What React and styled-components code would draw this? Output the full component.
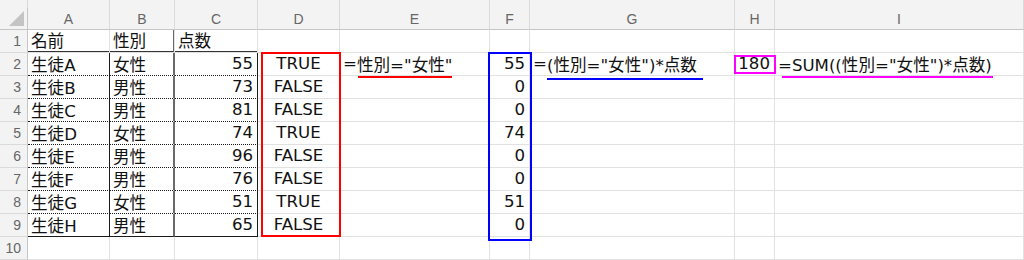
import React from 'react';
import styled, { createGlobalStyle } from 'styled-components';

const GlobalStyle = createGlobalStyle`
  html, body {
    margin: 0;
    padding: 0;
    background: #ffffff;
  }
  * {
    box-sizing: border-box;
  }
`;

const FONT = `"DejaVu Sans", "Noto Sans CJK JP", sans-serif`;

const Sheet = styled.div`
  display: grid;
  grid-template-columns: 28px 82px 65px 83px 82px 150px 40px 205px 40px 1fr;
  grid-template-rows: 8px 22px repeat(10, 23px);
  width: 1024px;
  height: 260px;
  overflow: hidden;
  font-family: ${FONT};
  font-size: 16.6px;
  color: #111;
  background: #fff;
`;

const Strip = styled.div`
  grid-column: ${(p) => p.$col};
  grid-row: 1;
  background: #f3f3f3;
  border-right: 1px solid #dadada;
`;

const ColHead = styled.div`
  grid-column: ${(p) => p.$col};
  grid-row: 2;
  display: flex;
  align-items: center;
  justify-content: center;
  background: #f3f3f3;
  border-right: 1px solid #dadada;
  border-bottom: 1px solid #c6c6c6;
  font-family: "Liberation Sans", sans-serif;
  font-size: 14px;
  color: #666;
`;

const Corner = styled.div`
  grid-column: 1;
  grid-row: 2;
  position: relative;
  background: #f3f3f3;
  border-right: 1px solid #c6c6c6;
  border-bottom: 1px solid #c6c6c6;

  &::after {
    content: '';
    position: absolute;
    right: 3px;
    bottom: 3px;
    width: 15px;
    height: 15px;
    background: #c4c4c4;
    clip-path: polygon(100% 0, 100% 100%, 0 100%);
  }
`;

const RowHead = styled.div`
  grid-column: 1;
  grid-row: ${(p) => p.$row};
  display: flex;
  align-items: center;
  justify-content: flex-end;
  padding-right: 6px;
  background: #f3f3f3;
  border-right: 1px solid #c6c6c6;
  border-bottom: 1px solid #dadada;
  font-family: "Liberation Sans", sans-serif;
  font-size: 14px;
  color: #666;
`;

const Cell = styled.div`
  grid-column: ${(p) => p.$col};
  grid-row: ${(p) => p.$row};
  display: flex;
  align-items: center;
  justify-content: ${(p) =>
    p.$align === 'right' ? 'flex-end' : p.$align === 'center' ? 'center' : 'flex-start'};
  padding: 0 ${(p) => (p.$align === 'right' ? '4px' : '0')} 1px ${(p) => (p.$align === 'left' ? '3px' : '0')};
  border-right: 1px solid #e1e1e1;
  border-bottom: 1px solid #e1e1e1;
  white-space: nowrap;
  overflow: visible;
`;

const TableCell = styled(Cell)`
  border-right: ${(p) => p.$right || '1px solid #1a1a1a'};
  border-bottom: ${(p) => p.$bottom || '1px dotted #1a1a1a'};
`;

const Frame = styled.div`
  grid-column: ${(p) => p.$col};
  grid-row: ${(p) => p.$rows};
  margin: ${(p) => p.$margin};
  border: 2px solid ${(p) => p.$color};
  pointer-events: none;
`;

const Marked = styled.span`
  position: relative;

  &::after {
    content: '';
    position: absolute;
    left: ${(p) => p.$from}px;
    right: ${(p) => -p.$extra}px;
    bottom: ${(p) => p.$drop}px;
    height: 2px;
    background: ${(p) => p.$color};
  }
`;

const cols = ['A', 'B', 'C', 'D', 'E', 'F', 'G', 'H', 'I'];

const students = [
  ['生徒A', '女性', 55],
  ['生徒B', '男性', 73],
  ['生徒C', '男性', 81],
  ['生徒D', '女性', 74],
  ['生徒E', '男性', 96],
  ['生徒F', '男性', 76],
  ['生徒G', '女性', 51],
  ['生徒H', '男性', 65],
];

// grid row of sheet row n (strip = 1, header = 2)
const gr = (n) => n + 2;

export default function App() {
  return (
    <>
      <GlobalStyle />
      <Sheet>
        <Strip $col={1} />
        {cols.map((c, i) => (
          <Strip key={'s' + c} $col={i + 2} />
        ))}
        <Corner />
        {cols.map((c, i) => (
          <ColHead key={c} $col={i + 2}>
            {c}
          </ColHead>
        ))}
        {Array.from({ length: 10 }, (_, i) => (
          <RowHead key={'r' + i} $row={gr(i + 1)}>
            {i + 1}
          </RowHead>
        ))}

        {/* header row of the data table */}
        <TableCell $col={2} $row={gr(1)} $align="left" $bottom="2px solid #333">名前</TableCell>
        <TableCell $col={3} $row={gr(1)} $align="left" $bottom="2px solid #333" $right="2px solid #6a6a6a">性別</TableCell>
        <TableCell $col={4} $row={gr(1)} $align="left" $bottom="2px solid #333">点数</TableCell>

        {students.map(([name, sex, score], i) => {
          const row = gr(i + 2);
          const last = i === students.length - 1;
          const bottom = last ? '1px solid #1a1a1a' : undefined;
          const female = sex === '女性';
          return (
            <React.Fragment key={name}>
              <TableCell $col={2} $row={row} $align="left" $bottom={bottom}>{name}</TableCell>
              <TableCell $col={3} $row={row} $align="left" $bottom={bottom} $right="2px solid #6a6a6a">{sex}</TableCell>
              <TableCell $col={4} $row={row} $align="right" $bottom={bottom}>{score}</TableCell>
              <Cell $col={5} $row={row} $align="center">{female ? 'TRUE' : 'FALSE'}</Cell>
              <Cell $col={7} $row={row} $align="right">{female ? score : 0}</Cell>
            </React.Fragment>
          );
        })}

        {/* empty cells */}
        {[2, 3, 4, 5, 6, 7, 8, 9, 10].map((c) =>
          [1, 10].map((r) => <Cell key={`e${c}-${r}`} $col={c} $row={gr(r)} />)
        )}
        {[5, 7].map((c) => (
          <Cell key={`e${c}-1`} $col={c} $row={gr(1)} />
        ))}
        {[6, 8, 9, 10].map((c) =>
          [3, 4, 5, 6, 7, 8, 9].map((r) => <Cell key={`f${c}-${r}`} $col={c} $row={gr(r)} />)
        )}
        {[6, 8, 9, 10].map((c) => (
          <Cell key={`g${c}-1`} $col={c} $row={gr(1)} />
        ))}

        <Cell $col={6} $row={gr(2)} $align="left">
          =<Marked $from={1} $extra={0} $drop={-2} $color="#ff0000">性別="女性"</Marked>
        </Cell>
        <Cell $col={8} $row={gr(2)} $align="left">
          =<Marked $from={0} $extra={6} $drop={-4} $color="#0000ff">(性別="女性")*点数</Marked>
        </Cell>
        <Cell $col={9} $row={gr(2)} $align="right">180</Cell>
        <Cell $col={10} $row={gr(2)} $align="left">
          <Marked $from={4} $extra={1} $drop={-2} $color="#ff00ff">=SUM((性別="女性")*点数)</Marked>
        </Cell>

        <Frame $col={5} $rows={`${gr(2)} / ${gr(10)}`} $margin="-1px -1px 0 3px" $color="#ff0000" />
        <Frame $col={7} $rows={`${gr(2)} / ${gr(10)}`} $margin="-1px -2px -4px -2px" $color="#0000ff" />
        <Frame $col={9} $rows={`${gr(2)}`} $margin="2px -1px 2px -1px" $color="#ff00ff" />
      </Sheet>
    </>
  );
}
